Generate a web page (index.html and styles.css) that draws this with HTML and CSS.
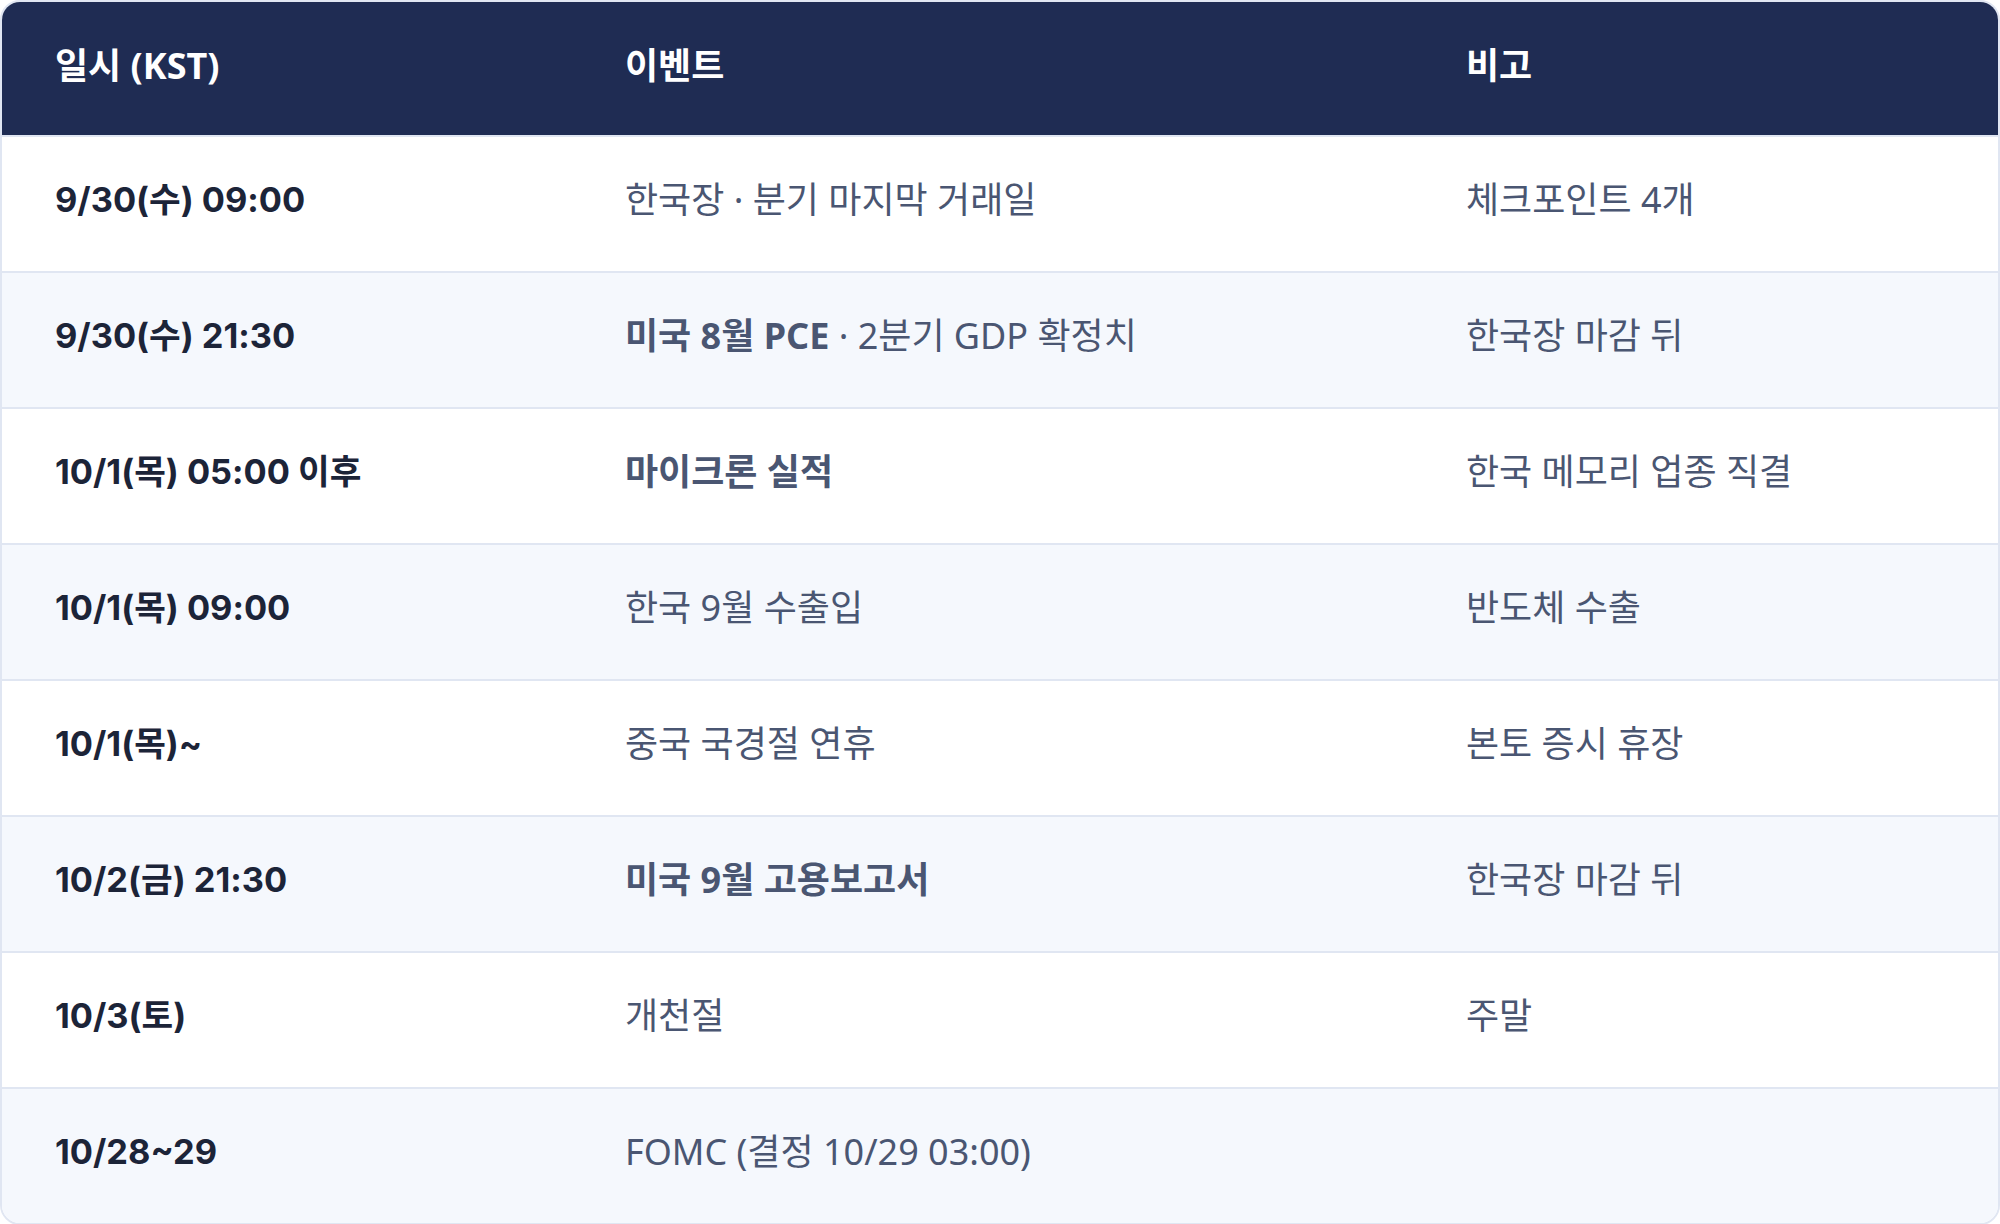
FILE: index.html
```html
<!DOCTYPE html>
<html lang="ko">
<head>
<meta charset="utf-8">
<title>일정</title>
<link rel="stylesheet" href="styles.css">
</head>
<body>
<div class="card">
  <table class="sched">
    <colgroup>
      <col class="c-date">
      <col class="c-event">
      <col class="c-note">
    </colgroup>
    <thead>
      <tr><th class="d">일시 (KST)</th><th>이벤트</th><th>비고</th></tr>
    </thead>
    <tbody>
      <tr><td class="d">9/30(수) 09:00</td><td>한국장 · 분기 마지막 거래일</td><td>체크포인트 4개</td></tr>
      <tr><td class="d">9/30(수) 21:30</td><td><b>미국 8월 PCE</b> · 2분기 GDP 확정치</td><td>한국장 마감 뒤</td></tr>
      <tr><td class="d">10/1(목) 05:00 이후</td><td><b>마이크론 실적</b></td><td>한국 메모리 업종 직결</td></tr>
      <tr><td class="d">10/1(목) 09:00</td><td>한국 9월 수출입</td><td>반도체 수출</td></tr>
      <tr><td class="d">10/1(목)~</td><td>중국 국경절 연휴</td><td>본토 증시 휴장</td></tr>
      <tr><td class="d">10/2(금) 21:30</td><td><b>미국 9월 고용보고서</b></td><td>한국장 마감 뒤</td></tr>
      <tr><td class="d">10/3(토)</td><td>개천절</td><td>주말</td></tr>
      <tr><td class="d">10/28~29</td><td>FOMC (결정 10/29 03:00)</td><td></td></tr>
    </tbody>
  </table>
</div>
</body>
</html>
```
FILE: styles.css
```css
html, body {
  margin: 0;
  padding: 0;
  background: #ffffff;
}
body {
  font-family: "Noto Sans", "Noto Sans CJK KR", sans-serif;
}
.card {
  border: 2px solid #e0e6f2;
  border-radius: 20px;
  overflow: hidden;
  background: #ffffff;
}
.sched {
  width: 100%;
  border-collapse: collapse;
  table-layout: fixed;
}
.c-date { width: 570px; }
.c-event { width: 841px; }
.sched th {
  background: #1f2c53;
  color: #ffffff;
  font-weight: 700;
  font-size: 36px;
  line-height: 54px;
  text-align: left;
  padding: 37px 52px 42px 53px;
}
.sched td {
  font-size: 36px;
  line-height: 54px;
  color: #4a5672;
  padding: 36px 52px 44px 53px;
  border-top: 2px solid #e0e6f2;
  white-space: nowrap;
}
.sched th.d {
  font-family: "Noto Sans", "Noto Sans CJK KR", sans-serif;
}
.sched td.d {
  font-family: Inter, "Noto Sans CJK KR", sans-serif;
  font-size: 34.4px;
  color: #1c2438;
  font-weight: 700;
}
.sched td b {
  font-weight: 700;
}
.sched tbody tr:nth-child(even) td {
  background: #f5f8fd;
}
```
